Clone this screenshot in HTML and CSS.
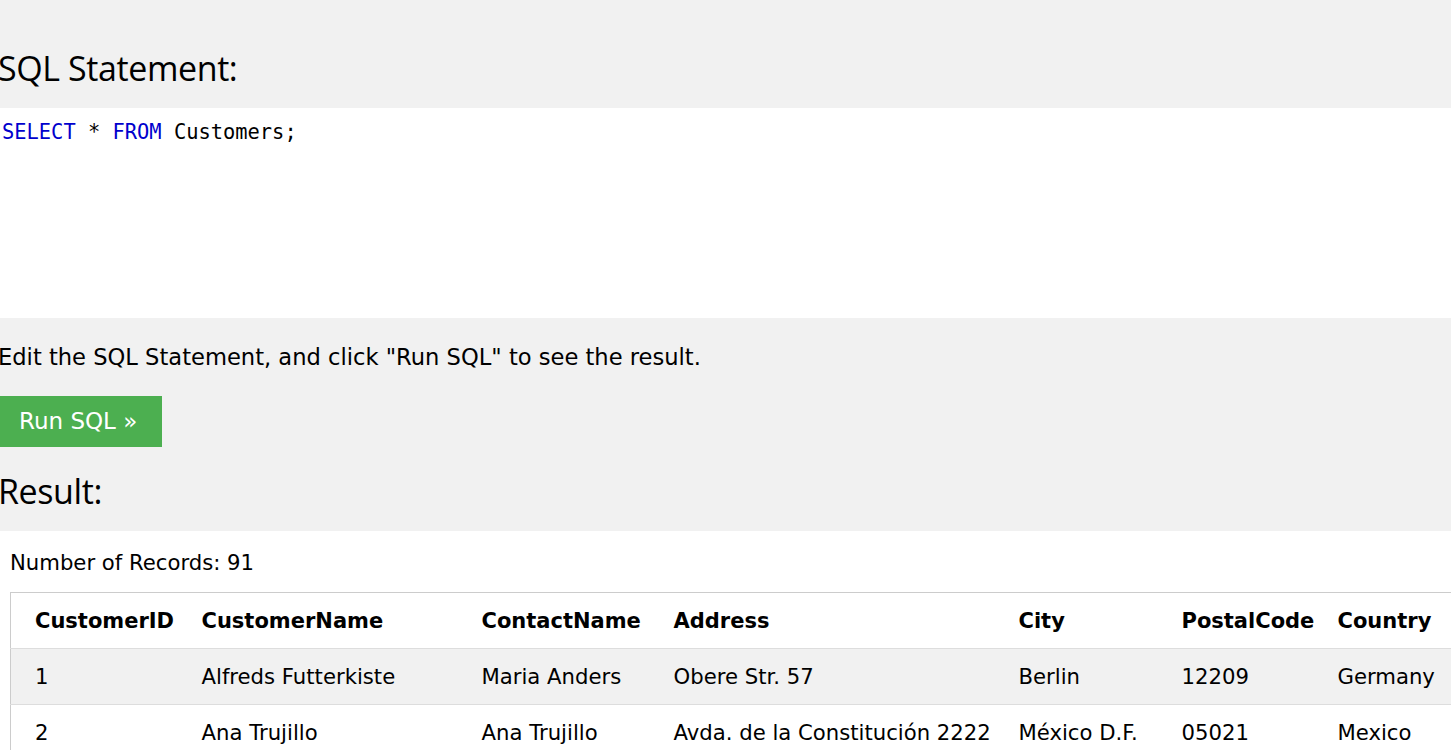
FILE: index.html
```html
<!DOCTYPE html>
<html lang="en">
<head>
<meta charset="utf-8">
<title>SQL Tryit</title>
<link rel="stylesheet" href="styles.css">
</head>
<body>
<div class="page">
  <section class="panel panel-top">
    <h3 class="heading">SQL Statement:</h3>
  </section>
  <div class="code"><span class="kw">SELECT</span> * <span class="kw">FROM</span> Customers;</div>
  <section class="panel panel-mid">
    <p class="hint">Edit the SQL Statement, and click "Run SQL" to see the result.</p>
    <button class="run" type="button">Run SQL »</button>
    <h3 class="heading heading-result">Result:</h3>
  </section>
  <section class="result">
    <p class="count">Number of Records: 91</p>
    <table class="records">
      <colgroup>
        <col class="c1"><col class="c2"><col class="c3"><col class="c4"><col class="c5"><col class="c6"><col class="c7">
      </colgroup>
      <tr>
        <th>CustomerID</th><th>CustomerName</th><th>ContactName</th><th>Address</th><th>City</th><th>PostalCode</th><th>Country</th>
      </tr>
      <tr>
        <td>1</td><td>Alfreds Futterkiste</td><td>Maria Anders</td><td>Obere Str. 57</td><td>Berlin</td><td>12209</td><td>Germany</td>
      </tr>
      <tr>
        <td>2</td><td>Ana Trujillo</td><td>Ana Trujillo</td><td>Avda. de la Constitución 2222</td><td>México D.F.</td><td>05021</td><td>Mexico</td>
      </tr>
    </table>
  </section>
</div>
</body>
</html>
```

FILE: styles.css
```css
html, body {
  margin: 0;
  padding: 0;
  overflow: hidden;
  background: #ffffff;
}

body {
  font-family: "DejaVu Sans", Verdana, sans-serif;
  font-size: 21.2px;
  line-height: 28px;
  color: #000000;
}

.page {
  width: 1451px;
}

.panel {
  background: #f1f1f1;
}

.panel-top {
  height: 108px;
  display: flex;
  flex-direction: column;
}

.heading {
  margin: 0 0 0 -2px;
  font-family: "Open Sans", "Noto Sans", sans-serif;
  font-weight: 400;
  font-size: 34px;
  line-height: 40px;
  letter-spacing: -0.4px;
}

.panel-top .heading {
  margin-top: 48px;
}

.code {
  background: #ffffff;
  height: 210px;
  box-sizing: border-box;
  padding: 12px 0 0 2px;
  font-family: "DejaVu Sans Mono", "Liberation Mono", monospace;
  font-size: 20.4px;
  line-height: 24px;
  color: #000000;
}

.kw {
  color: #0000cd;
}

.panel-mid {
  height: 213px;
  box-sizing: border-box;
  padding-top: 23px;
  display: flex;
  flex-direction: column;
  align-items: flex-start;
}

.hint {
  margin: 0 0 0 -2px;
  font-size: 22.6px;
  line-height: 32px;
  white-space: nowrap;
}

.run {
  margin-top: 23px;
  width: 162px;
  box-sizing: border-box;
  padding: 10px 0 11px 19px;
  border: none;
  background: #4caf50;
  color: #ffffff;
  font-family: "DejaVu Sans", Verdana, sans-serif;
  font-size: 23px;
  line-height: 30px;
  text-align: left;
  cursor: pointer;
}

.heading-result {
  margin-top: 24px;
}

.result {
  padding: 18px 0 0 10px;
}

.count {
  margin: 0;
  white-space: nowrap;
}

.records {
  margin-top: 15px;
  border-collapse: collapse;
  border: 1px solid #cccccc;
  table-layout: fixed;
  width: 1560px;
}

.c1 { width: 179px; }
.c2 { width: 280px; }
.c3 { width: 192px; }
.c4 { width: 345px; }
.c5 { width: 163px; }
.c6 { width: 156px; }
.c7 { width: 245px; }

.records th,
.records td {
  height: 56px;
  box-sizing: border-box;
  padding: 1px 12px 0;
  text-align: left;
  vertical-align: middle;
  white-space: nowrap;
  border-bottom: 1px solid #dddddd;
}

.records th:first-child,
.records td:first-child {
  padding-left: 24px;
}

.records th {
  font-weight: 700;
  font-size: 21px;
}

.records tr:nth-child(even) {
  background: #f1f1f1;
}
```
